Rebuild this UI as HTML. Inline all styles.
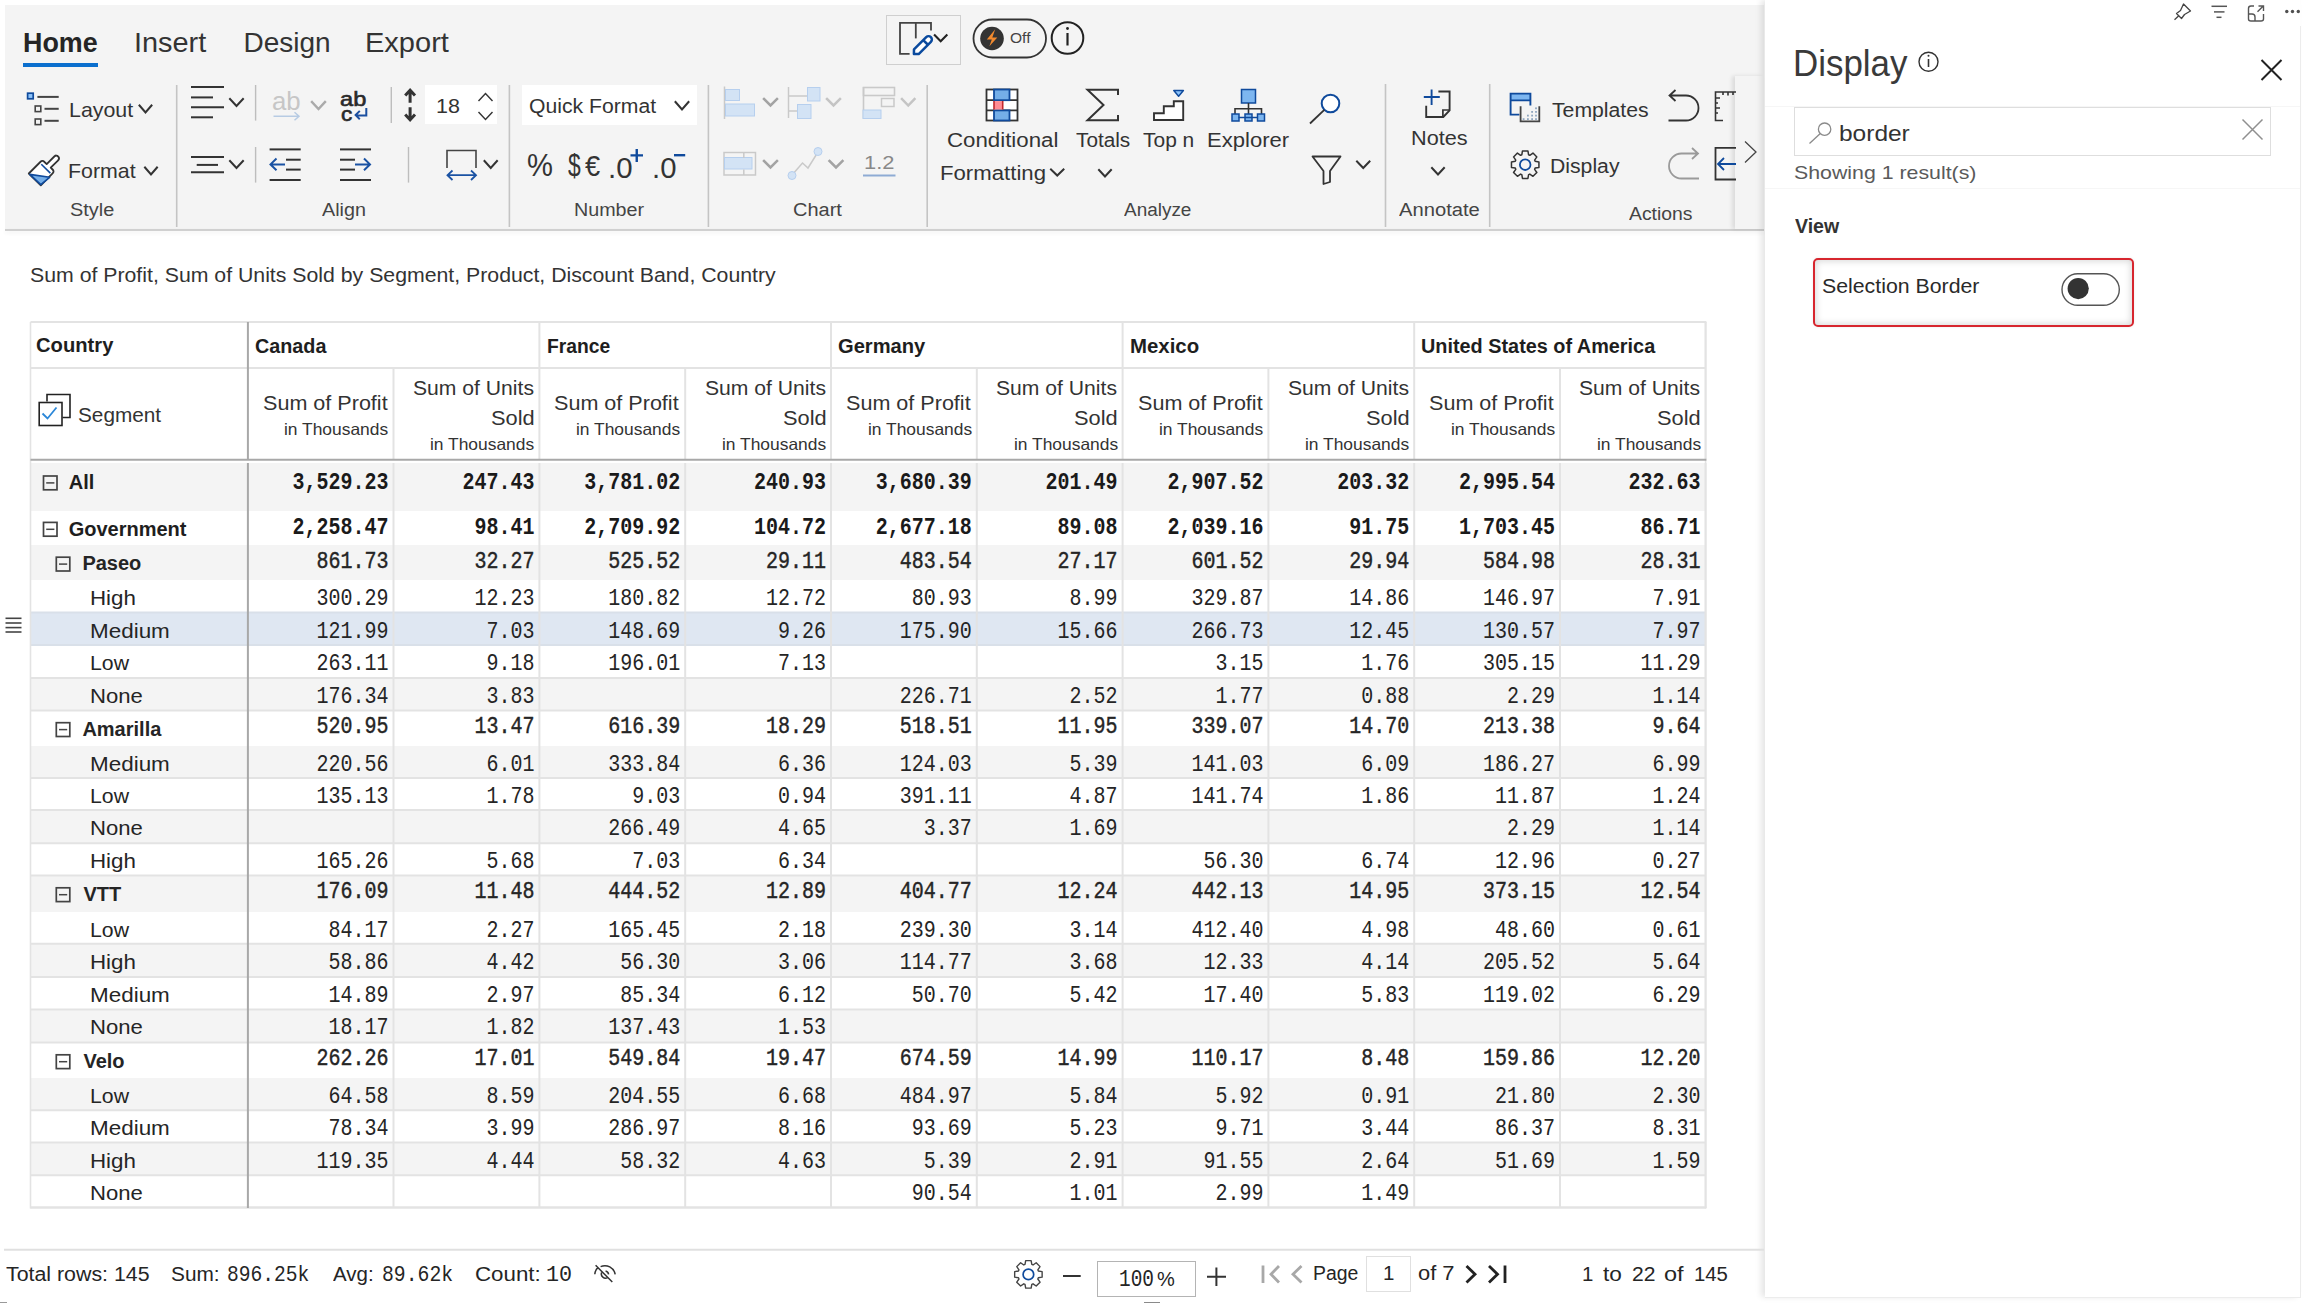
<!DOCTYPE html>
<html><head><meta charset="utf-8"><style>
html,body{margin:0;padding:0;background:#fff;}
body{position:relative;width:2304px;height:1303px;overflow:hidden;}
.t,.n{position:absolute;white-space:nowrap;line-height:1;transform-origin:0 0;}
.n{font-family:'Liberation Mono';font-size:20px;color:#252525;transform:scaleY(1.18);}
.b{font-weight:700;color:#1a1a1a;}
svg{position:absolute;left:0;top:0;}
</style></head><body>
<div style="position:absolute;left:5px;top:5px;width:1759px;height:224px;background:#f4f4f4;"></div><div style="position:absolute;left:5px;top:229px;width:1759px;height:2px;background:#d0d0d0;box-shadow:0 2px 4px rgba(0,0,0,0.07);"></div><div style="position:absolute;left:23px;top:63px;width:75px;height:4px;background:#0b6fce;"></div><div style="position:absolute;left:425px;top:85px;width:72px;height:39px;background:#ffffff;"></div><div style="position:absolute;left:522px;top:85px;width:175px;height:40px;background:#ffffff;"></div><div style="position:absolute;left:1735px;top:76px;width:29px;height:153px;background:#f4f4f4;box-shadow:-3px 0 4px rgba(0,0,0,0.10);"></div><div style="position:absolute;left:885.5px;top:14.5px;width:75px;height:50.5px;background:transparent;border:1.5px solid #cfcfcf;box-sizing:border-box;"></div><div style="position:absolute;left:1765px;top:0px;width:535px;height:1297px;background:#ffffff;box-shadow:-4px 0 6px rgba(0,0,0,0.10);"></div><div style="position:absolute;left:2299.5px;top:26px;width:1.5px;height:1271px;background:#ececec;"></div><div style="position:absolute;left:1765px;top:1296.5px;width:536px;height:1.5px;background:#ececec;"></div><div style="position:absolute;left:1765px;top:105.5px;width:535px;height:1px;background:#f6f6f6;"></div><div style="position:absolute;left:1765px;top:187.8px;width:535px;height:1px;background:#f6f6f6;"></div><div style="position:absolute;left:1794px;top:107px;width:477px;height:49px;background:#fff;border:1.5px solid #dedede;box-sizing:border-box;"></div><div style="position:absolute;left:1813px;top:257.5px;width:320.5px;height:69px;background:#fff;border:2px solid #d7262e;border-radius:5px;box-sizing:border-box;box-shadow:inset 0 0 7px 1px rgba(0,0,0,0.16), 0 0 3px rgba(0,0,0,0.08);"></div><div style="position:absolute;left:30.5px;top:463px;width:1675.5px;height:48px;background:#f4f4f4;"></div><div style="position:absolute;left:30.5px;top:511px;width:1675.5px;height:34px;background:#fff;"></div><div style="position:absolute;left:30.5px;top:545px;width:1675.5px;height:35px;background:#f4f4f4;"></div><div style="position:absolute;left:30.5px;top:580px;width:1675.5px;height:32.5px;background:#fff;"></div><div style="position:absolute;left:30.5px;top:612.5px;width:1675.5px;height:32.5px;background:#dfe7f2;"></div><div style="position:absolute;left:30.5px;top:645px;width:1675.5px;height:33px;background:#fff;"></div><div style="position:absolute;left:30.5px;top:678px;width:1675.5px;height:32.5px;background:#f4f4f4;"></div><div style="position:absolute;left:30.5px;top:710.5px;width:1675.5px;height:35.5px;background:#fff;"></div><div style="position:absolute;left:30.5px;top:746px;width:1675.5px;height:32px;background:#f4f4f4;"></div><div style="position:absolute;left:30.5px;top:778px;width:1675.5px;height:32px;background:#fff;"></div><div style="position:absolute;left:30.5px;top:810px;width:1675.5px;height:33.299999999999955px;background:#f4f4f4;"></div><div style="position:absolute;left:30.5px;top:843.3px;width:1675.5px;height:32.30000000000007px;background:#fff;"></div><div style="position:absolute;left:30.5px;top:875.6px;width:1675.5px;height:36.0px;background:#f4f4f4;"></div><div style="position:absolute;left:30.5px;top:911.6px;width:1675.5px;height:32.10000000000002px;background:#fff;"></div><div style="position:absolute;left:30.5px;top:943.7px;width:1675.5px;height:33.19999999999993px;background:#f4f4f4;"></div><div style="position:absolute;left:30.5px;top:976.9px;width:1675.5px;height:32.5px;background:#fff;"></div><div style="position:absolute;left:30.5px;top:1009.4px;width:1675.5px;height:33.19999999999993px;background:#f4f4f4;"></div><div style="position:absolute;left:30.5px;top:1042.6px;width:1675.5px;height:35.200000000000045px;background:#fff;"></div><div style="position:absolute;left:30.5px;top:1077.8px;width:1675.5px;height:32.5px;background:#f4f4f4;"></div><div style="position:absolute;left:30.5px;top:1110.3px;width:1675.5px;height:32.299999999999955px;background:#fff;"></div><div style="position:absolute;left:30.5px;top:1142.6px;width:1675.5px;height:32.600000000000136px;background:#f4f4f4;"></div><div style="position:absolute;left:30.5px;top:1175.2px;width:1675.5px;height:32.299999999999955px;background:#fff;"></div><div style="position:absolute;left:1097px;top:1260.5px;width:99px;height:36px;background:#fff;border:1.5px solid #b4b4b4;box-sizing:border-box;"></div><div style="position:absolute;left:1365.5px;top:1255.5px;width:45.5px;height:36px;background:#fff;border:1.5px solid #e0e0e0;box-sizing:border-box;"></div><div style="position:absolute;left:1144px;top:1301.5px;width:16px;height:2px;background:#8a8a8a;"></div><div style="position:absolute;left:0px;top:1302px;width:7px;height:1px;background:#999;"></div>
<svg width="2304" height="1303" viewBox="0 0 2304 1303"><line x1="176.7" y1="85" x2="176.7" y2="227" stroke="#c4c4c4" stroke-width="1.6"/><line x1="509.4" y1="85" x2="509.4" y2="227" stroke="#c4c4c4" stroke-width="1.6"/><line x1="708.4" y1="85" x2="708.4" y2="227" stroke="#c4c4c4" stroke-width="1.6"/><line x1="927.2" y1="85" x2="927.2" y2="227" stroke="#c4c4c4" stroke-width="1.6"/><line x1="1385.5" y1="84" x2="1385.5" y2="227" stroke="#c4c4c4" stroke-width="1.6"/><line x1="1489.7" y1="84" x2="1489.7" y2="227" stroke="#c4c4c4" stroke-width="1.6"/><line x1="255.6" y1="85" x2="255.6" y2="120.6" stroke="#bdbdbd" stroke-width="1.4"/><line x1="255.6" y1="147" x2="255.6" y2="182.6" stroke="#bdbdbd" stroke-width="1.4"/><line x1="391.3" y1="87" x2="391.3" y2="123" stroke="#bdbdbd" stroke-width="1.4"/><line x1="408.5" y1="147" x2="408.5" y2="182.6" stroke="#bdbdbd" stroke-width="1.4"/><rect x="27.6" y="93.2" width="5.6" height="5.6" fill="#8cc3fb" stroke="#0f4a9c" stroke-width="1.7"/><line x1="37.4" y1="96.9" x2="58.7" y2="96.9" stroke="#444" stroke-width="2" stroke-linecap="butt"/><rect x="35.2" y="106" width="5.6" height="5.6" fill="none" stroke="#444" stroke-width="1.6"/><rect x="35.2" y="119" width="5.6" height="5.6" fill="none" stroke="#444" stroke-width="1.6"/><line x1="44.5" y1="108.8" x2="58.7" y2="108.8" stroke="#444" stroke-width="2" stroke-linecap="butt"/><line x1="44.5" y1="120.8" x2="58.7" y2="120.8" stroke="#444" stroke-width="2" stroke-linecap="butt"/><polyline points="139.5,105.5 145.5,112.5 151.5,105.5" fill="none" stroke="#333" stroke-width="2" stroke-linecap="square"/><path d="M28.8,173.5 L40.3,162 Q42.4,159.9 44.5,162 L46.7,164.1 L54.3,156.5 Q56.4,154.5 58.3,156.6 Q60,158.6 57.9,160.6 L50.7,167.6 L52.6,169.5 Q54.5,171.4 52.6,173.3 L40.8,185.3 Z" fill="#fff" stroke="#333" stroke-width="1.8" stroke-linejoin="round"/><path d="M29.8,174.4 L49.6,177.3 L40.8,184.6 Z" fill="#74aee8" stroke="#0f4a9c" stroke-width="1.6" stroke-linejoin="round"/><line x1="41.3" y1="164.2" x2="50.3" y2="173.1" stroke="#0f4a9c" stroke-width="1.6" stroke-linecap="butt"/><polyline points="145,167.5 151.0,174.5 157,167.5" fill="none" stroke="#333" stroke-width="2" stroke-linecap="square"/><line x1="191" y1="86.9" x2="224" y2="86.9" stroke="#333" stroke-width="2" stroke-linecap="butt"/><line x1="191" y1="97.4" x2="213" y2="97.4" stroke="#333" stroke-width="2" stroke-linecap="butt"/><line x1="191" y1="107.3" x2="224" y2="107.3" stroke="#333" stroke-width="2" stroke-linecap="butt"/><line x1="191" y1="117.3" x2="213" y2="117.3" stroke="#333" stroke-width="2" stroke-linecap="butt"/><polyline points="230,99 236.5,106 243,99" fill="none" stroke="#333" stroke-width="2" stroke-linecap="square"/><path d="M273.5,116.3 H299 M294.5,112.3 L299,116.3 L294.5,120.3" fill="none" stroke="#b7cbe3" stroke-width="1.5"/><polyline points="312,102 318.5,109 325,102" fill="none" stroke="#aaaaaa" stroke-width="2.4" stroke-linecap="square"/><path d="M366.3,108 V115.6 H356 M359.8,110.9 L355.6,115.1 L359.8,119.3" fill="none" stroke="#1a4fa0" stroke-width="2"/><path d="M410.1,92 V102.7 M410.1,107.3 V118 M405.2,95.6 L410.1,90.3 L415,95.6 M405.2,114.6 L410.1,119.9 L415,114.6" fill="none" stroke="#333" stroke-width="3"/><polyline points="478.5,101 485.5,93.5 492.5,101" fill="none" stroke="#333" stroke-width="1.4"/><polyline points="478.5,112 485.5,119.5 492.5,112" fill="none" stroke="#333" stroke-width="1.4"/><line x1="191" y1="157" x2="224" y2="157" stroke="#333" stroke-width="2" stroke-linecap="butt"/><line x1="196.7" y1="164.9" x2="218" y2="164.9" stroke="#333" stroke-width="2" stroke-linecap="butt"/><line x1="191" y1="172.2" x2="224" y2="172.2" stroke="#333" stroke-width="2" stroke-linecap="butt"/><polyline points="230,161 236.5,168 243,161" fill="none" stroke="#333" stroke-width="2" stroke-linecap="square"/><line x1="269.6" y1="149.4" x2="300.7" y2="149.4" stroke="#333" stroke-width="2" stroke-linecap="butt"/><line x1="286" y1="159.7" x2="300.7" y2="159.7" stroke="#333" stroke-width="2" stroke-linecap="butt"/><line x1="286" y1="169.6" x2="300.7" y2="169.6" stroke="#333" stroke-width="2" stroke-linecap="butt"/><line x1="269.6" y1="180" x2="300.7" y2="180" stroke="#333" stroke-width="2" stroke-linecap="butt"/><path d="M270.5,164.4 H285 M276.5,158.5 L270.5,164.4 L276.5,170.3" fill="none" stroke="#1a52a3" stroke-width="2"/><line x1="340" y1="149.4" x2="371" y2="149.4" stroke="#333" stroke-width="2" stroke-linecap="butt"/><line x1="340" y1="159.7" x2="355" y2="159.7" stroke="#333" stroke-width="2" stroke-linecap="butt"/><line x1="340" y1="169.6" x2="355" y2="169.6" stroke="#333" stroke-width="2" stroke-linecap="butt"/><line x1="340" y1="180" x2="371" y2="180" stroke="#333" stroke-width="2" stroke-linecap="butt"/><path d="M355,164.4 H370 M364,158.5 L370,164.4 L364,170.3" fill="none" stroke="#1a52a3" stroke-width="2"/><path d="M447,168 V150.5 H476 V168" fill="none" stroke="#444" stroke-width="1.6"/><path d="M447.5,175.2 H476 M452.5,170.5 L447.5,175.2 L452.5,180 M471,170.5 L476,175.2 L471,180" fill="none" stroke="#1a52a3" stroke-width="1.8"/><polyline points="484.5,161 490.75,168 497,161" fill="none" stroke="#333" stroke-width="2" stroke-linecap="square"/><polyline points="675.5,102 682.0,109.5 688.5,102" fill="none" stroke="#333" stroke-width="2" stroke-linecap="square"/><path d="M630.5,155.4 H643 M636.75,149 V161.9" stroke="#0f4a9c" stroke-width="2.4"/><line x1="674" y1="155.2" x2="685.2" y2="155.2" stroke="#0f4a9c" stroke-width="2.4" stroke-linecap="butt"/><line x1="724.5" y1="86.5" x2="724.5" y2="119" stroke="#c9c9c9" stroke-width="1.5" stroke-linecap="butt"/><rect x="725.5" y="89.5" width="14" height="11" fill="#d3e3f5" stroke="#b6cfee" stroke-width="1"/><rect x="725.5" y="104" width="29" height="12" fill="#d3e3f5" stroke="#b6cfee" stroke-width="1"/><polyline points="764,99 770.5,105.5 777,99" fill="none" stroke="#a3a3a3" stroke-width="2.5" stroke-linecap="square"/><path d="M788.5,87 V118 M788.5,96 H807 M788.5,111 H797" stroke="#c9c9c9" stroke-width="1.5" fill="none"/><rect x="807.5" y="87.5" width="12.5" height="13.5" fill="#d3e3f5" stroke="#b6cfee" stroke-width="1"/><rect x="797.5" y="104.5" width="13.5" height="14" fill="#d3e3f5" stroke="#b6cfee" stroke-width="1"/><polyline points="827,99 833.5,105.5 840,99" fill="none" stroke="#c4c4c4" stroke-width="2.5" stroke-linecap="square"/><rect x="863.5" y="87.5" width="31" height="8" fill="none" stroke="#c9c9c9" stroke-width="1.6"/><line x1="863.5" y1="87" x2="863.5" y2="118.5" stroke="#c9c9c9" stroke-width="1.6" stroke-linecap="butt"/><rect x="881.5" y="98.5" width="12.5" height="8" fill="none" stroke="#c9c9c9" stroke-width="1.5"/><rect x="863" y="110" width="18" height="8.5" fill="#d3e3f5" stroke="#b6cfee" stroke-width="1"/><polyline points="902,99 908.25,105.5 914.5,99" fill="none" stroke="#c4c4c4" stroke-width="2.5" stroke-linecap="square"/><rect x="724" y="152.5" width="31.5" height="22.5" fill="none" stroke="#c9c9c9" stroke-width="1.5"/><rect x="724.5" y="157.5" width="27.5" height="11.5" fill="#d3e3f5" stroke="#b6cfee" stroke-width="1"/><line x1="743.8" y1="152.5" x2="743.8" y2="158" stroke="#c9c9c9" stroke-width="1.5" stroke-linecap="butt"/><line x1="743.8" y1="169.5" x2="743.8" y2="175" stroke="#c9c9c9" stroke-width="1.5" stroke-linecap="butt"/><polyline points="764,161 770.5,167.5 777,161" fill="none" stroke="#a3a3a3" stroke-width="2.5" stroke-linecap="square"/><polyline points="792,175 802.5,163 808,168 818,152" fill="none" stroke="#c9c9c9" stroke-width="1.5"/><circle cx="792" cy="175.5" r="4" fill="#d3e3f5" stroke="#b6cfee" stroke-width="1"/><circle cx="818" cy="151.5" r="4" fill="#d3e3f5" stroke="#b6cfee" stroke-width="1"/><polyline points="829.5,161 836.0,167.5 842.5,161" fill="none" stroke="#a3a3a3" stroke-width="2.5" stroke-linecap="square"/><line x1="863" y1="175.5" x2="895.5" y2="175.5" stroke="#8eabd4" stroke-width="1.8" stroke-linecap="butt"/><rect x="986.5" y="89.5" width="31" height="31" fill="#fff" stroke="#333" stroke-width="1.8"/><path d="M986.5,100.2 H1017.5 M986.5,110.4 H1017.5" stroke="#333" stroke-width="1.8" fill="none"/><rect x="994" y="89.5" width="15.5" height="10.7" fill="#74aee8" stroke="#0f4a9c" stroke-width="1.8"/><rect x="994" y="110.4" width="15.5" height="10.1" fill="#74aee8" stroke="#0f4a9c" stroke-width="1.8"/><rect x="994" y="101.1" width="8.7" height="8.4" fill="#ff8c94"/><path d="M994,101 V109.5 M1002.7,101 V109.5" stroke="#c0282d" stroke-width="1.6" fill="none"/><polyline points="1051,169.5 1057.25,175.5 1063.5,169.5" fill="none" stroke="#333" stroke-width="2" stroke-linecap="square"/><path d="M1118,95 V89.8 H1087.5 L1103.5,105 L1087.5,120.3 H1118 V115" fill="none" stroke="#333" stroke-width="2" stroke-linejoin="miter"/><polyline points="1099,170 1105.0,176.5 1111,170" fill="none" stroke="#333" stroke-width="2" stroke-linecap="square"/><path d="M1154,120 V113.3 H1163.8 V106.3 H1173.8 V101.2 H1183.2 V120 Z" fill="#fff" stroke="#333" stroke-width="1.9"/><path d="M1173.8,90.6 H1183.4 L1178.6,96.2 Z" fill="#8cc3fb" stroke="#0f4a9c" stroke-width="1.5" stroke-linejoin="round"/><rect x="1241.5" y="89.5" width="14" height="13.5" fill="#7db6f0" stroke="#0f4a9c" stroke-width="1.5"/><path d="M1248.5,103 V114 M1235,114.5 V108.7 H1261.5 V114.5" fill="none" stroke="#333" stroke-width="1.6"/><rect x="1232.0" y="114" width="7" height="7" fill="#7db6f0" stroke="#0f4a9c" stroke-width="1.5"/><rect x="1245.0" y="114" width="7" height="7" fill="#7db6f0" stroke="#0f4a9c" stroke-width="1.5"/><rect x="1257.5" y="114" width="7" height="7" fill="#7db6f0" stroke="#0f4a9c" stroke-width="1.5"/><path d="M1238.5,117.5 H1258" stroke="#0f4a9c" stroke-width="1.5"/><circle cx="1330.5" cy="103.5" r="8.8" fill="#fff" stroke="#0f4a9c" stroke-width="2"/><line x1="1310" y1="123.5" x2="1324.3" y2="109.8" stroke="#333" stroke-width="1.8" stroke-linecap="butt"/><path d="M1312.5,156.5 H1340.5 L1330,171 V182 L1323.5,184 V171 Z" fill="none" stroke="#333" stroke-width="1.8" stroke-linejoin="round"/><polyline points="1357,161.5 1363.25,168 1369.5,161.5" fill="none" stroke="#333" stroke-width="2" stroke-linecap="square"/><path d="M1438.4,91.5 H1449.6 V110.3 L1443.3,117 H1426.2 V105.7" fill="none" stroke="#333" stroke-width="1.9"/><path d="M1442.9,117 V110 H1449.6" fill="none" stroke="#333" stroke-width="1.7"/><path d="M1423.8,97 H1439.8 M1431.6,89.4 V104.9" stroke="#0f4a9c" stroke-width="1.9"/><polyline points="1432,168 1438.0,174.5 1444,168" fill="none" stroke="#333" stroke-width="2" stroke-linecap="square"/><rect x="1510.6" y="93.6" width="19.8" height="6.8" fill="#7db6f0"/><path d="M1519.4,114.6 H1510.6 V93.6 H1530.4 V105.4 M1510.6,100.4 H1530.4" fill="none" stroke="#0f4a9c" stroke-width="1.9"/><path d="M1520.6,106.3 V121.4 H1539.3 V106.3" fill="none" stroke="#444" stroke-width="1.8"/><rect x="1535.1" y="107.39999999999999" width="1.8" height="1.8" fill="#8fa6bf"/><rect x="1531.1999999999998" y="111.0" width="1.8" height="1.8" fill="#8fa6bf"/><rect x="1535.1" y="111.0" width="1.8" height="1.8" fill="#8fa6bf"/><rect x="1527.0" y="114.69999999999999" width="1.8" height="1.8" fill="#8fa6bf"/><rect x="1531.1999999999998" y="114.69999999999999" width="1.8" height="1.8" fill="#8fa6bf"/><rect x="1535.1" y="114.69999999999999" width="1.8" height="1.8" fill="#8fa6bf"/><rect x="1522.6999999999998" y="118.19999999999999" width="1.8" height="1.8" fill="#8fa6bf"/><rect x="1527.0" y="118.19999999999999" width="1.8" height="1.8" fill="#8fa6bf"/><rect x="1531.1999999999998" y="118.19999999999999" width="1.8" height="1.8" fill="#8fa6bf"/><rect x="1535.1" y="118.19999999999999" width="1.8" height="1.8" fill="#8fa6bf"/><polygon points="1535.13,161.30 1538.93,161.97 1538.93,167.43 1535.13,168.10 1534.63,169.32 1536.84,172.48 1532.98,176.34 1529.82,174.13 1528.60,174.63 1527.93,178.43 1522.47,178.43 1521.80,174.63 1520.58,174.13 1517.42,176.34 1513.56,172.48 1515.77,169.32 1515.27,168.10 1511.47,167.43 1511.47,161.97 1515.27,161.30 1515.77,160.08 1513.56,156.92 1517.42,153.06 1520.58,155.27 1521.80,154.77 1522.47,150.97 1527.93,150.97 1528.60,154.77 1529.82,155.27 1532.98,153.06 1536.84,156.92 1534.63,160.08" fill="none" stroke="#333" stroke-width="1.5" stroke-linejoin="round"/><circle cx="1525.2" cy="164.7" r="5.3" fill="none" stroke="#0f4a9c" stroke-width="1.8"/><path d="M1668.5,120.5 H1686 A12.5,12.5 0 0 0 1686,95.5 H1670 M1675.5,90 L1669.5,95.5 L1675.5,101" fill="none" stroke="#333" stroke-width="1.8"/><path d="M1699,178.5 H1681.5 A12.5,12.5 0 0 1 1681.5,153.5 H1697.5 M1692,148 L1698,153.5 L1692,159" fill="none" stroke="#9a9a9a" stroke-width="1.8"/><path d="M1723,92 H1715.5 V120.5 H1723 M1715.5,92 H1736 M1720,98 H1715.5 M1718,103 H1715.5 M1720,108 H1715.5 M1718,113 H1715.5 M1723,92 V95 M1728,92 V95.5 M1733,92 V95" fill="none" stroke="#333" stroke-width="1.6"/><path d="M1736,147.8 H1715.5 V179.5 H1736" fill="none" stroke="#333" stroke-width="1.8"/><path d="M1718,164 H1736 M1724,158 L1718,164 L1724,170" fill="none" stroke="#0f4a9c" stroke-width="1.8"/><polyline points="1745,141.5 1756,152 1745,162.5" fill="none" stroke="#444" stroke-width="1.3"/><path d="M931,30.5 V22.8 H900 V53.8 H909.6" fill="none" stroke="#444" stroke-width="1.8"/><line x1="915.8" y1="22.8" x2="915.8" y2="38.4" stroke="#444" stroke-width="1.8" stroke-linecap="butt"/><g transform="translate(922.4,45.6) rotate(-45)"><path d="M-12,0 L-8.6,-3.3 H8.7 A3.3,3.3 0 0 1 8.7,3.3 H-8.6 Z" fill="#fff" stroke="#0a4a9e" stroke-width="2.5" stroke-linejoin="round"/><line x1="4.5" y1="-3.3" x2="4.5" y2="3.3" stroke="#0a4a9e" stroke-width="2.5"/></g><polyline points="934.8,35.2 940.7,41.2 946.6,35.2" fill="none" stroke="#222" stroke-width="2.1" stroke-linecap="square"/><rect x="973.5" y="19.5" width="72.5" height="38" rx="19" fill="none" stroke="#333" stroke-width="1.8"/><circle cx="992" cy="38.5" r="11.8" fill="#333"/><path d="M995.2,29.3 L986.8,39.4 H991.8 L989.4,46.3 L997.3,37.5 H992.3 Z" fill="#f28a2e"/><circle cx="1067.5" cy="38" r="15.8" fill="none" stroke="#222" stroke-width="2"/><line x1="1067.5" y1="33" x2="1067.5" y2="45.5" stroke="#222" stroke-width="2.2" stroke-linecap="butt"/><circle cx="1067.5" cy="28.5" r="1.4" fill="#222"/><path d="M2183.5,4 L2190.5,11 L2184.5,14.5 L2181.5,18.5 L2176.5,13.5 L2180.5,10.5 Z M2178.5,16 L2174.5,19.8" fill="none" stroke="#444" stroke-width="1.3" stroke-linejoin="round"/><line x1="2211.5" y1="6.3" x2="2227" y2="6.3" stroke="#555" stroke-width="1.5" stroke-linecap="butt"/><line x1="2214" y1="11.9" x2="2224.5" y2="11.9" stroke="#555" stroke-width="1.5" stroke-linecap="butt"/><line x1="2216.5" y1="17.3" x2="2221.5" y2="17.3" stroke="#555" stroke-width="1.5" stroke-linecap="butt"/><path d="M2254,6 H2251 Q2248.5,6 2248.5,8.5 V19 Q2248.5,21 2251,21 H2261 Q2263.5,21 2263.5,19 V14 M2248.5,14 H2252 Q2255,14 2255,17 V21 M2257.5,11.8 L2263,6.2 M2258.5,6 H2263.5 V11" fill="none" stroke="#555" stroke-width="1.4"/><circle cx="2286.8" cy="11.5" r="1.7" fill="#505050"/><circle cx="2292.5" cy="11.5" r="1.7" fill="#505050"/><circle cx="2298.3" cy="11.5" r="1.7" fill="#505050"/><circle cx="1928.5" cy="61.7" r="9.5" fill="none" stroke="#333" stroke-width="1.4"/><line x1="1928.5" y1="59" x2="1928.5" y2="67" stroke="#333" stroke-width="1.6" stroke-linecap="butt"/><circle cx="1928.5" cy="55.8" r="1" fill="#333"/><path d="M2261.5,60 L2281.5,80 M2281.5,60 L2261.5,80" stroke="#222" stroke-width="2"/><circle cx="1824.6" cy="129.2" r="6.2" fill="none" stroke="#8a8a8a" stroke-width="1.3"/><line x1="1809.5" y1="143.5" x2="1820.3" y2="133.5" stroke="#8a8a8a" stroke-width="1.3" stroke-linecap="butt"/><path d="M2242.5,119.5 L2262.5,139.5 M2262.5,119.5 L2242.5,139.5" stroke="#8f8f8f" stroke-width="1.5"/><rect x="2062" y="273.8" width="57.3" height="31.5" rx="15.75" fill="#fff" stroke="#555" stroke-width="1.4"/><circle cx="2078.2" cy="288.6" r="10.6" fill="#333"/><rect x="43.5" y="476" width="13.5" height="13.8" fill="none" stroke="#444" stroke-width="1.7"/><line x1="46.2" y1="482.9" x2="54.4" y2="482.9" stroke="#444" stroke-width="1.5" stroke-linecap="butt"/><rect x="43.5" y="522.4" width="13.5" height="13.8" fill="none" stroke="#444" stroke-width="1.7"/><line x1="46.2" y1="529.3" x2="54.4" y2="529.3" stroke="#444" stroke-width="1.5" stroke-linecap="butt"/><rect x="56.3" y="557.2" width="13.5" height="13.8" fill="none" stroke="#444" stroke-width="1.7"/><line x1="59" y1="564.1" x2="67.2" y2="564.1" stroke="#444" stroke-width="1.5" stroke-linecap="butt"/><line x1="30.5" y1="612.5" x2="1706" y2="612.5" stroke="#d9e0e9" stroke-width="2" stroke-linecap="butt"/><line x1="30.5" y1="645" x2="1706" y2="645" stroke="#d9e0e9" stroke-width="2" stroke-linecap="butt"/><line x1="30.5" y1="678" x2="1706" y2="678" stroke="#e3e3e3" stroke-width="2" stroke-linecap="butt"/><line x1="30.5" y1="710.5" x2="1706" y2="710.5" stroke="#e3e3e3" stroke-width="2" stroke-linecap="butt"/><rect x="56.3" y="722.7" width="13.5" height="13.8" fill="none" stroke="#444" stroke-width="1.7"/><line x1="59" y1="729.6" x2="67.2" y2="729.6" stroke="#444" stroke-width="1.5" stroke-linecap="butt"/><line x1="30.5" y1="778" x2="1706" y2="778" stroke="#e3e3e3" stroke-width="2" stroke-linecap="butt"/><line x1="30.5" y1="810" x2="1706" y2="810" stroke="#e3e3e3" stroke-width="2" stroke-linecap="butt"/><line x1="30.5" y1="843.3" x2="1706" y2="843.3" stroke="#e3e3e3" stroke-width="2" stroke-linecap="butt"/><line x1="30.5" y1="875.6" x2="1706" y2="875.6" stroke="#e3e3e3" stroke-width="2" stroke-linecap="butt"/><rect x="56.3" y="887.8000000000001" width="13.5" height="13.8" fill="none" stroke="#444" stroke-width="1.7"/><line x1="59" y1="894.7" x2="67.2" y2="894.7" stroke="#444" stroke-width="1.5" stroke-linecap="butt"/><line x1="30.5" y1="943.7" x2="1706" y2="943.7" stroke="#e3e3e3" stroke-width="2" stroke-linecap="butt"/><line x1="30.5" y1="976.9" x2="1706" y2="976.9" stroke="#e3e3e3" stroke-width="2" stroke-linecap="butt"/><line x1="30.5" y1="1009.4" x2="1706" y2="1009.4" stroke="#e3e3e3" stroke-width="2" stroke-linecap="butt"/><line x1="30.5" y1="1042.6" x2="1706" y2="1042.6" stroke="#e3e3e3" stroke-width="2" stroke-linecap="butt"/><rect x="56.3" y="1054.8" width="13.5" height="13.8" fill="none" stroke="#444" stroke-width="1.7"/><line x1="59" y1="1061.6999999999998" x2="67.2" y2="1061.6999999999998" stroke="#444" stroke-width="1.5" stroke-linecap="butt"/><line x1="30.5" y1="1110.3" x2="1706" y2="1110.3" stroke="#e3e3e3" stroke-width="2" stroke-linecap="butt"/><line x1="30.5" y1="1142.6" x2="1706" y2="1142.6" stroke="#e3e3e3" stroke-width="2" stroke-linecap="butt"/><line x1="30.5" y1="1175.2" x2="1706" y2="1175.2" stroke="#e3e3e3" stroke-width="2" stroke-linecap="butt"/><line x1="30.5" y1="1207.5" x2="1706" y2="1207.5" stroke="#e3e3e3" stroke-width="2" stroke-linecap="butt"/><line x1="30.5" y1="322" x2="1706.4" y2="322" stroke="#e3e3e3" stroke-width="2" stroke-linecap="butt"/><line x1="30.5" y1="322" x2="30.5" y2="1208.5" stroke="#e3e3e3" stroke-width="1.6" stroke-linecap="butt"/><line x1="1705.6" y1="322" x2="1705.6" y2="1208.5" stroke="#e3e3e3" stroke-width="1.6" stroke-linecap="butt"/><line x1="30.5" y1="1207.5" x2="1706.4" y2="1207.5" stroke="#e3e3e3" stroke-width="2" stroke-linecap="butt"/><line x1="30.5" y1="368" x2="1706" y2="368" stroke="#e3e3e3" stroke-width="2" stroke-linecap="butt"/><line x1="247.9" y1="322" x2="247.9" y2="459" stroke="#a8a8a8" stroke-width="2" stroke-linecap="butt"/><line x1="247.9" y1="463" x2="247.9" y2="1208" stroke="#a8a8a8" stroke-width="2" stroke-linecap="butt"/><line x1="393.5" y1="368" x2="393.5" y2="459" stroke="#e3e3e3" stroke-width="2" stroke-linecap="butt"/><line x1="393.5" y1="463" x2="393.5" y2="1208" stroke="#e3e3e3" stroke-width="2" stroke-linecap="butt"/><line x1="539.4" y1="322" x2="539.4" y2="459" stroke="#e3e3e3" stroke-width="2" stroke-linecap="butt"/><line x1="539.4" y1="463" x2="539.4" y2="1208" stroke="#e3e3e3" stroke-width="2" stroke-linecap="butt"/><line x1="685.2" y1="368" x2="685.2" y2="459" stroke="#e3e3e3" stroke-width="2" stroke-linecap="butt"/><line x1="685.2" y1="463" x2="685.2" y2="1208" stroke="#e3e3e3" stroke-width="2" stroke-linecap="butt"/><line x1="831" y1="322" x2="831" y2="459" stroke="#e3e3e3" stroke-width="2" stroke-linecap="butt"/><line x1="831" y1="463" x2="831" y2="1208" stroke="#e3e3e3" stroke-width="2" stroke-linecap="butt"/><line x1="976.8" y1="368" x2="976.8" y2="459" stroke="#e3e3e3" stroke-width="2" stroke-linecap="butt"/><line x1="976.8" y1="463" x2="976.8" y2="1208" stroke="#e3e3e3" stroke-width="2" stroke-linecap="butt"/><line x1="1122.6" y1="322" x2="1122.6" y2="459" stroke="#e3e3e3" stroke-width="2" stroke-linecap="butt"/><line x1="1122.6" y1="463" x2="1122.6" y2="1208" stroke="#e3e3e3" stroke-width="2" stroke-linecap="butt"/><line x1="1268.4" y1="368" x2="1268.4" y2="459" stroke="#e3e3e3" stroke-width="2" stroke-linecap="butt"/><line x1="1268.4" y1="463" x2="1268.4" y2="1208" stroke="#e3e3e3" stroke-width="2" stroke-linecap="butt"/><line x1="1414.2" y1="322" x2="1414.2" y2="459" stroke="#e3e3e3" stroke-width="2" stroke-linecap="butt"/><line x1="1414.2" y1="463" x2="1414.2" y2="1208" stroke="#e3e3e3" stroke-width="2" stroke-linecap="butt"/><line x1="1560" y1="368" x2="1560" y2="459" stroke="#e3e3e3" stroke-width="2" stroke-linecap="butt"/><line x1="1560" y1="463" x2="1560" y2="1208" stroke="#e3e3e3" stroke-width="2" stroke-linecap="butt"/><line x1="1705.6" y1="322" x2="1705.6" y2="459" stroke="#e3e3e3" stroke-width="2" stroke-linecap="butt"/><line x1="1705.6" y1="463" x2="1705.6" y2="1208" stroke="#e3e3e3" stroke-width="2" stroke-linecap="butt"/><line x1="30.5" y1="459.8" x2="1706.4" y2="459.8" stroke="#a8a8a8" stroke-width="2" stroke-linecap="butt"/><path d="M47,401.5 V394.5 H70 V417.5 H62.5" fill="none" stroke="#222" stroke-width="1.6"/><rect x="39.2" y="402.5" width="22.8" height="23" fill="#fff" stroke="#222" stroke-width="1.6"/><polyline points="42.5,413.5 47.5,418.5 56.5,407.5" fill="none" stroke="#2b87d8" stroke-width="1.8"/><line x1="5.5" y1="618.3" x2="21.5" y2="618.3" stroke="#444" stroke-width="1.6" stroke-linecap="butt"/><line x1="5.5" y1="623" x2="21.5" y2="623" stroke="#444" stroke-width="1.6" stroke-linecap="butt"/><line x1="5.5" y1="627.6" x2="21.5" y2="627.6" stroke="#444" stroke-width="1.6" stroke-linecap="butt"/><line x1="5.5" y1="632" x2="21.5" y2="632" stroke="#444" stroke-width="1.6" stroke-linecap="butt"/><line x1="4" y1="1249.7" x2="1764" y2="1249.7" stroke="#e0e0e0" stroke-width="2" stroke-linecap="butt"/><path d="M594.8,1274.3 A10.4,10.4 0 0 1 597.8,1267.6 M600.6,1266.6 A10.5,10.5 0 0 1 615.2,1274.3 M595.6,1265.3 L612.3,1282 M605.6,1270.9 A4,4 0 0 1 608.6,1274.3 M601.6,1272.5 A4.2,4.2 0 0 0 607.6,1277.6" fill="none" stroke="#333" stroke-width="1.5"/><polygon points="1038.33,1271.00 1042.13,1271.67 1042.13,1277.13 1038.33,1277.80 1037.83,1279.02 1040.04,1282.18 1036.18,1286.04 1033.02,1283.83 1031.80,1284.33 1031.13,1288.13 1025.67,1288.13 1025.00,1284.33 1023.78,1283.83 1020.62,1286.04 1016.76,1282.18 1018.97,1279.02 1018.47,1277.80 1014.67,1277.13 1014.67,1271.67 1018.47,1271.00 1018.97,1269.78 1016.76,1266.62 1020.62,1262.76 1023.78,1264.97 1025.00,1264.47 1025.67,1260.67 1031.13,1260.67 1031.80,1264.47 1033.02,1264.97 1036.18,1262.76 1040.04,1266.62 1037.83,1269.78" fill="none" stroke="#444" stroke-width="1.4" stroke-linejoin="round"/><circle cx="1028.4" cy="1274.4" r="5.3" fill="none" stroke="#0f4a9c" stroke-width="1.7"/><line x1="1063" y1="1276" x2="1080.7" y2="1276" stroke="#333" stroke-width="2" stroke-linecap="butt"/><path d="M1216.4,1267.5 V1286 M1207,1276.8 H1226" stroke="#333" stroke-width="2"/><path d="M1263,1265.5 V1283 M1279,1266 L1271,1274.2 L1279,1282.5" fill="none" stroke="#a8a8a8" stroke-width="2.8"/><path d="M1301.5,1266 L1293,1274.2 L1301.5,1282.5" fill="none" stroke="#a8a8a8" stroke-width="2.8"/><path d="M1466.5,1266 L1475,1274.2 L1466.5,1282.5" fill="none" stroke="#222" stroke-width="2.8"/><path d="M1489,1266 L1497.5,1274.2 L1489,1282.5 M1505,1265.5 V1283" fill="none" stroke="#222" stroke-width="2.8"/></svg>
<div class="t" style="left:23.08px;top:29.00px;font-family:'Liberation Sans';font-size:28px;color:#252525;font-weight:700;transform:scaleX(0.9600);">Home</div><div class="t" style="left:134.14px;top:28.70px;font-family:'Liberation Sans';font-size:28px;color:#333;transform:scaleX(1.0309);">Insert</div><div class="t" style="left:243.41px;top:28.70px;font-family:'Liberation Sans';font-size:28px;color:#333;">Design</div><div class="t" style="left:365.13px;top:28.70px;font-family:'Liberation Sans';font-size:28px;color:#333;transform:scaleX(1.0367);">Export</div><div class="t" style="left:69.36px;top:98.80px;font-family:'Liberation Sans';font-size:21px;color:#333;transform:scaleX(1.0180);">Layout</div><div class="t" style="left:67.67px;top:160.40px;font-family:'Liberation Sans';font-size:21px;color:#333;transform:scaleX(1.0169);">Format</div><div class="t" style="left:70.29px;top:200.80px;font-family:'Liberation Sans';font-size:18px;color:#444;transform:scaleX(1.1053);">Style</div><div class="t" style="left:271.77px;top:88.70px;font-family:'Liberation Sans';font-size:25px;color:#c6c6c6;transform:scaleX(1.0308);">ab</div><div class="t" style="left:340.42px;top:88.50px;font-family:'Liberation Sans';font-size:20px;color:#2a2a2a;transform:scaleX(1.1800);-webkit-text-stroke:0.6px #2a2a2a;">ab</div><div class="t" style="left:340.88px;top:103.50px;font-family:'Liberation Sans';font-size:20px;color:#2a2a2a;transform:scaleX(1.1250);-webkit-text-stroke:0.6px #2a2a2a;">c</div><div class="t" style="left:436.43px;top:95.50px;font-family:'Liberation Sans';font-size:20px;color:#333;transform:scaleX(1.0750);">18</div><div class="t" style="left:322.40px;top:200.80px;font-family:'Liberation Sans';font-size:18px;color:#444;transform:scaleX(1.0974);">Align</div><div class="t" style="left:529.14px;top:96.20px;font-family:'Liberation Sans';font-size:20px;color:#333;transform:scaleX(1.0588);">Quick Format</div><div class="t" style="left:526.89px;top:149.30px;font-family:'Liberation Sans';font-size:32px;color:#333;transform:scaleX(0.9111);">%</div><div class="t" style="left:567.66px;top:150.30px;font-family:'Liberation Sans';font-size:31px;color:#333;transform:scaleX(0.7375);">$</div><div class="t" style="left:585.20px;top:151.30px;font-family:'Liberation Sans';font-size:30px;color:#333;transform:scaleX(0.9062);">€</div><div class="t" style="left:607.96px;top:154.30px;font-family:'Liberation Sans';font-size:29px;color:#333;transform:scaleX(1.0150);">.0</div><div class="t" style="left:651.77px;top:154.30px;font-family:'Liberation Sans';font-size:29px;color:#333;transform:scaleX(1.0100);">.0</div><div class="t" style="left:573.90px;top:201.20px;font-family:'Liberation Sans';font-size:18px;color:#444;transform:scaleX(1.0952);">Number</div><div class="t" style="left:863.78px;top:153.70px;font-family:'Liberation Sans';font-size:18px;color:#888888;transform:scaleX(1.2174);">1.2</div><div class="t" style="left:793.19px;top:201.00px;font-family:'Liberation Sans';font-size:18px;color:#444;transform:scaleX(1.1093);">Chart</div><div class="t" style="left:947.39px;top:130.30px;font-family:'Liberation Sans';font-size:20px;color:#333;transform:scaleX(1.1133);">Conditional</div><div class="t" style="left:940.08px;top:163.00px;font-family:'Liberation Sans';font-size:20px;color:#333;transform:scaleX(1.1086);">Formatting</div><div class="t" style="left:1076.00px;top:130.30px;font-family:'Liberation Sans';font-size:20px;color:#333;transform:scaleX(1.0385);">Totals</div><div class="t" style="left:1143.00px;top:130.30px;font-family:'Liberation Sans';font-size:20px;color:#333;transform:scaleX(1.0479);">Top n</div><div class="t" style="left:1207.39px;top:130.30px;font-family:'Liberation Sans';font-size:20px;color:#333;transform:scaleX(1.1028);">Explorer</div><div class="t" style="left:1123.90px;top:200.70px;font-family:'Liberation Sans';font-size:18px;color:#444;transform:scaleX(1.0524);">Analyze</div><div class="t" style="left:1410.83px;top:127.70px;font-family:'Liberation Sans';font-size:20px;color:#333;transform:scaleX(1.0840);">Notes</div><div class="t" style="left:1398.60px;top:200.50px;font-family:'Liberation Sans';font-size:18px;color:#444;transform:scaleX(1.1211);">Annotate</div><div class="t" style="left:1551.80px;top:99.50px;font-family:'Liberation Sans';font-size:20px;color:#333;transform:scaleX(1.0604);">Templates</div><div class="t" style="left:1550.48px;top:155.80px;font-family:'Liberation Sans';font-size:20px;color:#333;transform:scaleX(1.0594);">Display</div><div class="t" style="left:1628.80px;top:204.70px;font-family:'Liberation Sans';font-size:18px;color:#444;transform:scaleX(1.0763);">Actions</div><div class="t" style="left:1009.89px;top:31.00px;font-family:'Liberation Sans';font-size:14px;color:#444;transform:scaleX(1.1111);">Off</div><div class="t" style="left:1793.09px;top:45.90px;font-family:'Liberation Sans';font-size:36px;color:#3a3a3a;transform:scaleX(0.9696);">Display</div><div class="t" style="left:1838.89px;top:122.60px;font-family:'Liberation Sans';font-size:22px;color:#333;transform:scaleX(1.1129);">border</div><div class="t" style="left:1794.08px;top:163.40px;font-family:'Liberation Sans';font-size:19px;color:#5a5a5a;transform:scaleX(1.1217);">Showing 1 result(s)</div><div class="t" style="left:1795.00px;top:215.60px;font-family:'Liberation Sans';font-size:20px;color:#333;font-weight:700;transform:scaleX(0.9778);">View</div><div class="t" style="left:1822.44px;top:276.30px;font-family:'Liberation Sans';font-size:20px;color:#2a2a2a;transform:scaleX(1.0646);">Selection Border</div><div class="t" style="left:29.74px;top:264.60px;font-family:'Liberation Sans';font-size:20px;color:#333;transform:scaleX(1.0631);">Sum of Profit, Sum of Units Sold by Segment, Product, Discount Band, Country</div><div class="t" style="left:68.70px;top:471.80px;font-family:'Liberation Sans';font-size:20px;color:#1e1e1e;font-weight:700;">All</div><div class="t" style="left:68.70px;top:519.00px;font-family:'Liberation Sans';font-size:20px;color:#1e1e1e;font-weight:700;">Government</div><div class="t" style="left:82.40px;top:553.00px;font-family:'Liberation Sans';font-size:20px;color:#252525;font-weight:700;">Paseo</div><div class="t" style="left:89.77px;top:588.00px;font-family:'Liberation Sans';font-size:20px;color:#252525;transform:scaleX(1.1158);">High</div><div class="t" style="left:89.76px;top:620.50px;font-family:'Liberation Sans';font-size:20px;color:#252525;transform:scaleX(1.1221);">Medium</div><div class="t" style="left:89.87px;top:653.00px;font-family:'Liberation Sans';font-size:20px;color:#252525;transform:scaleX(1.0629);">Low</div><div class="t" style="left:89.79px;top:686.00px;font-family:'Liberation Sans';font-size:20px;color:#252525;transform:scaleX(1.1044);">None</div><div class="t" style="left:82.40px;top:718.50px;font-family:'Liberation Sans';font-size:20px;color:#252525;font-weight:700;">Amarilla</div><div class="t" style="left:89.76px;top:754.00px;font-family:'Liberation Sans';font-size:20px;color:#252525;transform:scaleX(1.1221);">Medium</div><div class="t" style="left:89.87px;top:786.00px;font-family:'Liberation Sans';font-size:20px;color:#252525;transform:scaleX(1.0629);">Low</div><div class="t" style="left:89.79px;top:818.00px;font-family:'Liberation Sans';font-size:20px;color:#252525;transform:scaleX(1.1044);">None</div><div class="t" style="left:89.77px;top:851.30px;font-family:'Liberation Sans';font-size:20px;color:#252525;transform:scaleX(1.1158);">High</div><div class="t" style="left:83.40px;top:883.60px;font-family:'Liberation Sans';font-size:20px;color:#252525;font-weight:700;">VTT</div><div class="t" style="left:89.87px;top:919.60px;font-family:'Liberation Sans';font-size:20px;color:#252525;transform:scaleX(1.0629);">Low</div><div class="t" style="left:89.77px;top:951.70px;font-family:'Liberation Sans';font-size:20px;color:#252525;transform:scaleX(1.1158);">High</div><div class="t" style="left:89.76px;top:984.90px;font-family:'Liberation Sans';font-size:20px;color:#252525;transform:scaleX(1.1221);">Medium</div><div class="t" style="left:89.79px;top:1017.40px;font-family:'Liberation Sans';font-size:20px;color:#252525;transform:scaleX(1.1044);">None</div><div class="t" style="left:83.40px;top:1050.60px;font-family:'Liberation Sans';font-size:20px;color:#252525;font-weight:700;">Velo</div><div class="t" style="left:89.87px;top:1085.80px;font-family:'Liberation Sans';font-size:20px;color:#252525;transform:scaleX(1.0629);">Low</div><div class="t" style="left:89.76px;top:1118.30px;font-family:'Liberation Sans';font-size:20px;color:#252525;transform:scaleX(1.1221);">Medium</div><div class="t" style="left:89.77px;top:1150.60px;font-family:'Liberation Sans';font-size:20px;color:#252525;transform:scaleX(1.1158);">High</div><div class="t" style="left:89.79px;top:1183.20px;font-family:'Liberation Sans';font-size:20px;color:#252525;transform:scaleX(1.1044);">None</div><div class="t" style="left:35.89px;top:335.20px;font-family:'Liberation Sans';font-size:20px;color:#1e1e1e;font-weight:700;transform:scaleX(1.0092);">Country</div><div class="t" style="left:77.96px;top:404.50px;font-family:'Liberation Sans';font-size:20px;color:#333;transform:scaleX(1.0380);">Segment</div><div class="t" style="left:254.81px;top:335.50px;font-family:'Liberation Sans';font-size:20px;color:#1e1e1e;font-weight:700;transform:scaleX(0.9887);">Canada</div><div class="t" style="left:546.54px;top:335.50px;font-family:'Liberation Sans';font-size:20px;color:#1e1e1e;font-weight:700;transform:scaleX(0.9641);">France</div><div class="t" style="left:837.59px;top:335.50px;font-family:'Liberation Sans';font-size:20px;color:#1e1e1e;font-weight:700;transform:scaleX(1.0070);">Germany</div><div class="t" style="left:1129.98px;top:335.50px;font-family:'Liberation Sans';font-size:20px;color:#1e1e1e;font-weight:700;transform:scaleX(1.0197);">Mexico</div><div class="t" style="left:1420.71px;top:335.50px;font-family:'Liberation Sans';font-size:20px;color:#1e1e1e;font-weight:700;transform:scaleX(0.9923);">United States of America</div><div class="t" style="left:262.72px;top:393.10px;font-family:'Liberation Sans';font-size:20px;color:#333;transform:scaleX(1.0783);">Sum of Profit</div><div class="t" style="left:284.45px;top:421.10px;font-family:'Liberation Sans';font-size:16.5px;color:#333;transform:scaleX(1.0546);">in Thousands</div><div class="t" style="left:413.24px;top:377.90px;font-family:'Liberation Sans';font-size:20px;color:#333;transform:scaleX(1.0566);">Sum of Units</div><div class="t" style="left:491.21px;top:408.40px;font-family:'Liberation Sans';font-size:20px;color:#333;transform:scaleX(1.0895);">Sold</div><div class="t" style="left:430.35px;top:436.40px;font-family:'Liberation Sans';font-size:16.5px;color:#333;transform:scaleX(1.0546);">in Thousands</div><div class="t" style="left:554.42px;top:393.10px;font-family:'Liberation Sans';font-size:20px;color:#333;transform:scaleX(1.0783);">Sum of Profit</div><div class="t" style="left:576.15px;top:421.10px;font-family:'Liberation Sans';font-size:16.5px;color:#333;transform:scaleX(1.0546);">in Thousands</div><div class="t" style="left:704.84px;top:377.90px;font-family:'Liberation Sans';font-size:20px;color:#333;transform:scaleX(1.0566);">Sum of Units</div><div class="t" style="left:782.81px;top:408.40px;font-family:'Liberation Sans';font-size:20px;color:#333;transform:scaleX(1.0895);">Sold</div><div class="t" style="left:721.95px;top:436.40px;font-family:'Liberation Sans';font-size:16.5px;color:#333;transform:scaleX(1.0546);">in Thousands</div><div class="t" style="left:846.02px;top:393.10px;font-family:'Liberation Sans';font-size:20px;color:#333;transform:scaleX(1.0783);">Sum of Profit</div><div class="t" style="left:867.75px;top:421.10px;font-family:'Liberation Sans';font-size:16.5px;color:#333;transform:scaleX(1.0546);">in Thousands</div><div class="t" style="left:996.44px;top:377.90px;font-family:'Liberation Sans';font-size:20px;color:#333;transform:scaleX(1.0566);">Sum of Units</div><div class="t" style="left:1074.41px;top:408.40px;font-family:'Liberation Sans';font-size:20px;color:#333;transform:scaleX(1.0895);">Sold</div><div class="t" style="left:1013.55px;top:436.40px;font-family:'Liberation Sans';font-size:16.5px;color:#333;transform:scaleX(1.0546);">in Thousands</div><div class="t" style="left:1137.62px;top:393.10px;font-family:'Liberation Sans';font-size:20px;color:#333;transform:scaleX(1.0783);">Sum of Profit</div><div class="t" style="left:1159.35px;top:421.10px;font-family:'Liberation Sans';font-size:16.5px;color:#333;transform:scaleX(1.0546);">in Thousands</div><div class="t" style="left:1288.04px;top:377.90px;font-family:'Liberation Sans';font-size:20px;color:#333;transform:scaleX(1.0566);">Sum of Units</div><div class="t" style="left:1366.01px;top:408.40px;font-family:'Liberation Sans';font-size:20px;color:#333;transform:scaleX(1.0895);">Sold</div><div class="t" style="left:1305.15px;top:436.40px;font-family:'Liberation Sans';font-size:16.5px;color:#333;transform:scaleX(1.0546);">in Thousands</div><div class="t" style="left:1429.22px;top:393.10px;font-family:'Liberation Sans';font-size:20px;color:#333;transform:scaleX(1.0783);">Sum of Profit</div><div class="t" style="left:1450.95px;top:421.10px;font-family:'Liberation Sans';font-size:16.5px;color:#333;transform:scaleX(1.0546);">in Thousands</div><div class="t" style="left:1579.44px;top:377.90px;font-family:'Liberation Sans';font-size:20px;color:#333;transform:scaleX(1.0566);">Sum of Units</div><div class="t" style="left:1657.41px;top:408.40px;font-family:'Liberation Sans';font-size:20px;color:#333;transform:scaleX(1.0895);">Sold</div><div class="t" style="left:1596.55px;top:436.40px;font-family:'Liberation Sans';font-size:16.5px;color:#333;transform:scaleX(1.0546);">in Thousands</div><div class="t" style="left:5.60px;top:1264.10px;font-family:'Liberation Sans';font-size:20px;color:#252525;transform:scaleX(1.0672);">Total rows: 145</div><div class="t" style="left:171.16px;top:1264.10px;font-family:'Liberation Sans';font-size:20px;color:#252525;transform:scaleX(1.0409);">Sum:</div><div class="t" style="left:226.77px;top:1267.10px;font-family:'Liberation Mono';font-size:19px;color:#252525;transform:scale(1.0321,1.2);transform-origin:0 14px;">896.25k</div><div class="t" style="left:333.30px;top:1264.10px;font-family:'Liberation Sans';font-size:20px;color:#252525;transform:scaleX(1.0237);">Avg:</div><div class="t" style="left:381.76px;top:1267.10px;font-family:'Liberation Mono';font-size:19px;color:#252525;transform:scale(1.0394,1.2);transform-origin:0 14px;">89.62k</div><div class="t" style="left:475.28px;top:1264.10px;font-family:'Liberation Sans';font-size:20px;color:#252525;transform:scaleX(1.1161);">Count:</div><div class="t" style="left:545.86px;top:1267.10px;font-family:'Liberation Mono';font-size:19px;color:#252525;transform:scale(1.1429,1.2);transform-origin:0 14px;">10</div><div class="t" style="left:1118.88px;top:1270.10px;font-family:'Liberation Mono';font-size:21px;color:#252525;transform:scale(0.9250,1.18);transform-origin:0 16px;">100</div><div class="t" style="left:1156.85px;top:1268.10px;font-family:'Liberation Sans';font-size:21px;color:#252525;transform:scaleX(0.9529);">%</div><div class="t" style="left:1312.56px;top:1263.40px;font-family:'Liberation Sans';font-size:20px;color:#252525;transform:scaleX(0.9705);">Page</div><div class="t" style="left:1382.72px;top:1263.40px;font-family:'Liberation Sans';font-size:20px;color:#252525;transform:scaleX(1.0278);">1</div><div class="t" style="left:1417.91px;top:1263.40px;font-family:'Liberation Sans';font-size:20px;color:#252525;transform:scaleX(1.0938);">of 7</div><div class="t" style="left:1581.88px;top:1263.50px;font-family:'Liberation Sans';font-size:20px;color:#252525;transform:scaleX(1.0222);">1</div><div class="t" style="left:1603.20px;top:1263.50px;font-family:'Liberation Sans';font-size:20px;color:#252525;transform:scaleX(1.1312);">to</div><div class="t" style="left:1631.64px;top:1263.50px;font-family:'Liberation Sans';font-size:20px;color:#252525;transform:scaleX(1.0550);">22</div><div class="t" style="left:1664.03px;top:1263.50px;font-family:'Liberation Sans';font-size:20px;color:#252525;transform:scaleX(1.1750);">of</div><div class="t" style="left:1693.68px;top:1263.50px;font-family:'Liberation Sans';font-size:20px;color:#252525;transform:scaleX(1.0156);">145</div><div class="n b" style="left:292.50px;top:474.20px;transform-origin:0 15px;">3,529.23</div><div class="n b" style="left:462.40px;top:474.20px;transform-origin:0 15px;">247.43</div><div class="n b" style="left:584.20px;top:474.20px;transform-origin:0 15px;">3,781.02</div><div class="n b" style="left:754.00px;top:474.20px;transform-origin:0 15px;">240.93</div><div class="n b" style="left:875.80px;top:474.20px;transform-origin:0 15px;">3,680.39</div><div class="n b" style="left:1045.60px;top:474.20px;transform-origin:0 15px;">201.49</div><div class="n b" style="left:1167.40px;top:474.20px;transform-origin:0 15px;">2,907.52</div><div class="n b" style="left:1337.20px;top:474.20px;transform-origin:0 15px;">203.32</div><div class="n b" style="left:1459.00px;top:474.20px;transform-origin:0 15px;">2,995.54</div><div class="n b" style="left:1628.60px;top:474.20px;transform-origin:0 15px;">232.63</div><div class="n b" style="left:292.50px;top:518.50px;transform-origin:0 15px;">2,258.47</div><div class="n b" style="left:474.40px;top:518.50px;transform-origin:0 15px;">98.41</div><div class="n b" style="left:584.20px;top:518.50px;transform-origin:0 15px;">2,709.92</div><div class="n b" style="left:754.00px;top:518.50px;transform-origin:0 15px;">104.72</div><div class="n b" style="left:875.80px;top:518.50px;transform-origin:0 15px;">2,677.18</div><div class="n b" style="left:1057.60px;top:518.50px;transform-origin:0 15px;">89.08</div><div class="n b" style="left:1167.40px;top:518.50px;transform-origin:0 15px;">2,039.16</div><div class="n b" style="left:1349.20px;top:518.50px;transform-origin:0 15px;">91.75</div><div class="n b" style="left:1459.00px;top:518.50px;transform-origin:0 15px;">1,703.45</div><div class="n b" style="left:1640.60px;top:518.50px;transform-origin:0 15px;">86.71</div><div class="n" style="left:316.50px;top:552.50px;transform-origin:0 15px;-webkit-text-stroke:0.35px #252525;">861.73</div><div class="n" style="left:474.40px;top:552.50px;transform-origin:0 15px;-webkit-text-stroke:0.35px #252525;">32.27</div><div class="n" style="left:608.20px;top:552.50px;transform-origin:0 15px;-webkit-text-stroke:0.35px #252525;">525.52</div><div class="n" style="left:766.00px;top:552.50px;transform-origin:0 15px;-webkit-text-stroke:0.35px #252525;">29.11</div><div class="n" style="left:899.80px;top:552.50px;transform-origin:0 15px;-webkit-text-stroke:0.35px #252525;">483.54</div><div class="n" style="left:1057.60px;top:552.50px;transform-origin:0 15px;-webkit-text-stroke:0.35px #252525;">27.17</div><div class="n" style="left:1191.40px;top:552.50px;transform-origin:0 15px;-webkit-text-stroke:0.35px #252525;">601.52</div><div class="n" style="left:1349.20px;top:552.50px;transform-origin:0 15px;-webkit-text-stroke:0.35px #252525;">29.94</div><div class="n" style="left:1483.00px;top:552.50px;transform-origin:0 15px;-webkit-text-stroke:0.35px #252525;">584.98</div><div class="n" style="left:1640.60px;top:552.50px;transform-origin:0 15px;-webkit-text-stroke:0.35px #252525;">28.31</div><div class="n" style="left:316.50px;top:590.00px;transform-origin:0 15px;">300.29</div><div class="n" style="left:474.40px;top:590.00px;transform-origin:0 15px;">12.23</div><div class="n" style="left:608.20px;top:590.00px;transform-origin:0 15px;">180.82</div><div class="n" style="left:766.00px;top:590.00px;transform-origin:0 15px;">12.72</div><div class="n" style="left:911.80px;top:590.00px;transform-origin:0 15px;">80.93</div><div class="n" style="left:1069.60px;top:590.00px;transform-origin:0 15px;">8.99</div><div class="n" style="left:1191.40px;top:590.00px;transform-origin:0 15px;">329.87</div><div class="n" style="left:1349.20px;top:590.00px;transform-origin:0 15px;">14.86</div><div class="n" style="left:1483.00px;top:590.00px;transform-origin:0 15px;">146.97</div><div class="n" style="left:1652.60px;top:590.00px;transform-origin:0 15px;">7.91</div><div class="n" style="left:316.50px;top:622.50px;transform-origin:0 15px;">121.99</div><div class="n" style="left:486.40px;top:622.50px;transform-origin:0 15px;">7.03</div><div class="n" style="left:608.20px;top:622.50px;transform-origin:0 15px;">148.69</div><div class="n" style="left:778.00px;top:622.50px;transform-origin:0 15px;">9.26</div><div class="n" style="left:899.80px;top:622.50px;transform-origin:0 15px;">175.90</div><div class="n" style="left:1057.60px;top:622.50px;transform-origin:0 15px;">15.66</div><div class="n" style="left:1191.40px;top:622.50px;transform-origin:0 15px;">266.73</div><div class="n" style="left:1349.20px;top:622.50px;transform-origin:0 15px;">12.45</div><div class="n" style="left:1483.00px;top:622.50px;transform-origin:0 15px;">130.57</div><div class="n" style="left:1652.60px;top:622.50px;transform-origin:0 15px;">7.97</div><div class="n" style="left:316.50px;top:655.00px;transform-origin:0 15px;">263.11</div><div class="n" style="left:486.40px;top:655.00px;transform-origin:0 15px;">9.18</div><div class="n" style="left:608.20px;top:655.00px;transform-origin:0 15px;">196.01</div><div class="n" style="left:778.00px;top:655.00px;transform-origin:0 15px;">7.13</div><div class="n" style="left:1215.40px;top:655.00px;transform-origin:0 15px;">3.15</div><div class="n" style="left:1361.20px;top:655.00px;transform-origin:0 15px;">1.76</div><div class="n" style="left:1483.00px;top:655.00px;transform-origin:0 15px;">305.15</div><div class="n" style="left:1640.60px;top:655.00px;transform-origin:0 15px;">11.29</div><div class="n" style="left:316.50px;top:688.00px;transform-origin:0 15px;">176.34</div><div class="n" style="left:486.40px;top:688.00px;transform-origin:0 15px;">3.83</div><div class="n" style="left:899.80px;top:688.00px;transform-origin:0 15px;">226.71</div><div class="n" style="left:1069.60px;top:688.00px;transform-origin:0 15px;">2.52</div><div class="n" style="left:1215.40px;top:688.00px;transform-origin:0 15px;">1.77</div><div class="n" style="left:1361.20px;top:688.00px;transform-origin:0 15px;">0.88</div><div class="n" style="left:1507.00px;top:688.00px;transform-origin:0 15px;">2.29</div><div class="n" style="left:1652.60px;top:688.00px;transform-origin:0 15px;">1.14</div><div class="n" style="left:316.50px;top:718.00px;transform-origin:0 15px;-webkit-text-stroke:0.35px #252525;">520.95</div><div class="n" style="left:474.40px;top:718.00px;transform-origin:0 15px;-webkit-text-stroke:0.35px #252525;">13.47</div><div class="n" style="left:608.20px;top:718.00px;transform-origin:0 15px;-webkit-text-stroke:0.35px #252525;">616.39</div><div class="n" style="left:766.00px;top:718.00px;transform-origin:0 15px;-webkit-text-stroke:0.35px #252525;">18.29</div><div class="n" style="left:899.80px;top:718.00px;transform-origin:0 15px;-webkit-text-stroke:0.35px #252525;">518.51</div><div class="n" style="left:1057.60px;top:718.00px;transform-origin:0 15px;-webkit-text-stroke:0.35px #252525;">11.95</div><div class="n" style="left:1191.40px;top:718.00px;transform-origin:0 15px;-webkit-text-stroke:0.35px #252525;">339.07</div><div class="n" style="left:1349.20px;top:718.00px;transform-origin:0 15px;-webkit-text-stroke:0.35px #252525;">14.70</div><div class="n" style="left:1483.00px;top:718.00px;transform-origin:0 15px;-webkit-text-stroke:0.35px #252525;">213.38</div><div class="n" style="left:1652.60px;top:718.00px;transform-origin:0 15px;-webkit-text-stroke:0.35px #252525;">9.64</div><div class="n" style="left:316.50px;top:756.00px;transform-origin:0 15px;">220.56</div><div class="n" style="left:486.40px;top:756.00px;transform-origin:0 15px;">6.01</div><div class="n" style="left:608.20px;top:756.00px;transform-origin:0 15px;">333.84</div><div class="n" style="left:778.00px;top:756.00px;transform-origin:0 15px;">6.36</div><div class="n" style="left:899.80px;top:756.00px;transform-origin:0 15px;">124.03</div><div class="n" style="left:1069.60px;top:756.00px;transform-origin:0 15px;">5.39</div><div class="n" style="left:1191.40px;top:756.00px;transform-origin:0 15px;">141.03</div><div class="n" style="left:1361.20px;top:756.00px;transform-origin:0 15px;">6.09</div><div class="n" style="left:1483.00px;top:756.00px;transform-origin:0 15px;">186.27</div><div class="n" style="left:1652.60px;top:756.00px;transform-origin:0 15px;">6.99</div><div class="n" style="left:316.50px;top:788.00px;transform-origin:0 15px;">135.13</div><div class="n" style="left:486.40px;top:788.00px;transform-origin:0 15px;">1.78</div><div class="n" style="left:632.20px;top:788.00px;transform-origin:0 15px;">9.03</div><div class="n" style="left:778.00px;top:788.00px;transform-origin:0 15px;">0.94</div><div class="n" style="left:899.80px;top:788.00px;transform-origin:0 15px;">391.11</div><div class="n" style="left:1069.60px;top:788.00px;transform-origin:0 15px;">4.87</div><div class="n" style="left:1191.40px;top:788.00px;transform-origin:0 15px;">141.74</div><div class="n" style="left:1361.20px;top:788.00px;transform-origin:0 15px;">1.86</div><div class="n" style="left:1495.00px;top:788.00px;transform-origin:0 15px;">11.87</div><div class="n" style="left:1652.60px;top:788.00px;transform-origin:0 15px;">1.24</div><div class="n" style="left:608.20px;top:820.00px;transform-origin:0 15px;">266.49</div><div class="n" style="left:778.00px;top:820.00px;transform-origin:0 15px;">4.65</div><div class="n" style="left:923.80px;top:820.00px;transform-origin:0 15px;">3.37</div><div class="n" style="left:1069.60px;top:820.00px;transform-origin:0 15px;">1.69</div><div class="n" style="left:1507.00px;top:820.00px;transform-origin:0 15px;">2.29</div><div class="n" style="left:1652.60px;top:820.00px;transform-origin:0 15px;">1.14</div><div class="n" style="left:316.50px;top:853.30px;transform-origin:0 15px;">165.26</div><div class="n" style="left:486.40px;top:853.30px;transform-origin:0 15px;">5.68</div><div class="n" style="left:632.20px;top:853.30px;transform-origin:0 15px;">7.03</div><div class="n" style="left:778.00px;top:853.30px;transform-origin:0 15px;">6.34</div><div class="n" style="left:1203.40px;top:853.30px;transform-origin:0 15px;">56.30</div><div class="n" style="left:1361.20px;top:853.30px;transform-origin:0 15px;">6.74</div><div class="n" style="left:1495.00px;top:853.30px;transform-origin:0 15px;">12.96</div><div class="n" style="left:1652.60px;top:853.30px;transform-origin:0 15px;">0.27</div><div class="n" style="left:316.50px;top:883.10px;transform-origin:0 15px;-webkit-text-stroke:0.35px #252525;">176.09</div><div class="n" style="left:474.40px;top:883.10px;transform-origin:0 15px;-webkit-text-stroke:0.35px #252525;">11.48</div><div class="n" style="left:608.20px;top:883.10px;transform-origin:0 15px;-webkit-text-stroke:0.35px #252525;">444.52</div><div class="n" style="left:766.00px;top:883.10px;transform-origin:0 15px;-webkit-text-stroke:0.35px #252525;">12.89</div><div class="n" style="left:899.80px;top:883.10px;transform-origin:0 15px;-webkit-text-stroke:0.35px #252525;">404.77</div><div class="n" style="left:1057.60px;top:883.10px;transform-origin:0 15px;-webkit-text-stroke:0.35px #252525;">12.24</div><div class="n" style="left:1191.40px;top:883.10px;transform-origin:0 15px;-webkit-text-stroke:0.35px #252525;">442.13</div><div class="n" style="left:1349.20px;top:883.10px;transform-origin:0 15px;-webkit-text-stroke:0.35px #252525;">14.95</div><div class="n" style="left:1483.00px;top:883.10px;transform-origin:0 15px;-webkit-text-stroke:0.35px #252525;">373.15</div><div class="n" style="left:1640.60px;top:883.10px;transform-origin:0 15px;-webkit-text-stroke:0.35px #252525;">12.54</div><div class="n" style="left:328.50px;top:921.60px;transform-origin:0 15px;">84.17</div><div class="n" style="left:486.40px;top:921.60px;transform-origin:0 15px;">2.27</div><div class="n" style="left:608.20px;top:921.60px;transform-origin:0 15px;">165.45</div><div class="n" style="left:778.00px;top:921.60px;transform-origin:0 15px;">2.18</div><div class="n" style="left:899.80px;top:921.60px;transform-origin:0 15px;">239.30</div><div class="n" style="left:1069.60px;top:921.60px;transform-origin:0 15px;">3.14</div><div class="n" style="left:1191.40px;top:921.60px;transform-origin:0 15px;">412.40</div><div class="n" style="left:1361.20px;top:921.60px;transform-origin:0 15px;">4.98</div><div class="n" style="left:1495.00px;top:921.60px;transform-origin:0 15px;">48.60</div><div class="n" style="left:1652.60px;top:921.60px;transform-origin:0 15px;">0.61</div><div class="n" style="left:328.50px;top:953.70px;transform-origin:0 15px;">58.86</div><div class="n" style="left:486.40px;top:953.70px;transform-origin:0 15px;">4.42</div><div class="n" style="left:620.20px;top:953.70px;transform-origin:0 15px;">56.30</div><div class="n" style="left:778.00px;top:953.70px;transform-origin:0 15px;">3.06</div><div class="n" style="left:899.80px;top:953.70px;transform-origin:0 15px;">114.77</div><div class="n" style="left:1069.60px;top:953.70px;transform-origin:0 15px;">3.68</div><div class="n" style="left:1203.40px;top:953.70px;transform-origin:0 15px;">12.33</div><div class="n" style="left:1361.20px;top:953.70px;transform-origin:0 15px;">4.14</div><div class="n" style="left:1483.00px;top:953.70px;transform-origin:0 15px;">205.52</div><div class="n" style="left:1652.60px;top:953.70px;transform-origin:0 15px;">5.64</div><div class="n" style="left:328.50px;top:986.90px;transform-origin:0 15px;">14.89</div><div class="n" style="left:486.40px;top:986.90px;transform-origin:0 15px;">2.97</div><div class="n" style="left:620.20px;top:986.90px;transform-origin:0 15px;">85.34</div><div class="n" style="left:778.00px;top:986.90px;transform-origin:0 15px;">6.12</div><div class="n" style="left:911.80px;top:986.90px;transform-origin:0 15px;">50.70</div><div class="n" style="left:1069.60px;top:986.90px;transform-origin:0 15px;">5.42</div><div class="n" style="left:1203.40px;top:986.90px;transform-origin:0 15px;">17.40</div><div class="n" style="left:1361.20px;top:986.90px;transform-origin:0 15px;">5.83</div><div class="n" style="left:1483.00px;top:986.90px;transform-origin:0 15px;">119.02</div><div class="n" style="left:1652.60px;top:986.90px;transform-origin:0 15px;">6.29</div><div class="n" style="left:328.50px;top:1019.40px;transform-origin:0 15px;">18.17</div><div class="n" style="left:486.40px;top:1019.40px;transform-origin:0 15px;">1.82</div><div class="n" style="left:608.20px;top:1019.40px;transform-origin:0 15px;">137.43</div><div class="n" style="left:778.00px;top:1019.40px;transform-origin:0 15px;">1.53</div><div class="n" style="left:316.50px;top:1050.10px;transform-origin:0 15px;-webkit-text-stroke:0.35px #252525;">262.26</div><div class="n" style="left:474.40px;top:1050.10px;transform-origin:0 15px;-webkit-text-stroke:0.35px #252525;">17.01</div><div class="n" style="left:608.20px;top:1050.10px;transform-origin:0 15px;-webkit-text-stroke:0.35px #252525;">549.84</div><div class="n" style="left:766.00px;top:1050.10px;transform-origin:0 15px;-webkit-text-stroke:0.35px #252525;">19.47</div><div class="n" style="left:899.80px;top:1050.10px;transform-origin:0 15px;-webkit-text-stroke:0.35px #252525;">674.59</div><div class="n" style="left:1057.60px;top:1050.10px;transform-origin:0 15px;-webkit-text-stroke:0.35px #252525;">14.99</div><div class="n" style="left:1191.40px;top:1050.10px;transform-origin:0 15px;-webkit-text-stroke:0.35px #252525;">110.17</div><div class="n" style="left:1361.20px;top:1050.10px;transform-origin:0 15px;-webkit-text-stroke:0.35px #252525;">8.48</div><div class="n" style="left:1483.00px;top:1050.10px;transform-origin:0 15px;-webkit-text-stroke:0.35px #252525;">159.86</div><div class="n" style="left:1640.60px;top:1050.10px;transform-origin:0 15px;-webkit-text-stroke:0.35px #252525;">12.20</div><div class="n" style="left:328.50px;top:1087.80px;transform-origin:0 15px;">64.58</div><div class="n" style="left:486.40px;top:1087.80px;transform-origin:0 15px;">8.59</div><div class="n" style="left:608.20px;top:1087.80px;transform-origin:0 15px;">204.55</div><div class="n" style="left:778.00px;top:1087.80px;transform-origin:0 15px;">6.68</div><div class="n" style="left:899.80px;top:1087.80px;transform-origin:0 15px;">484.97</div><div class="n" style="left:1069.60px;top:1087.80px;transform-origin:0 15px;">5.84</div><div class="n" style="left:1215.40px;top:1087.80px;transform-origin:0 15px;">5.92</div><div class="n" style="left:1361.20px;top:1087.80px;transform-origin:0 15px;">0.91</div><div class="n" style="left:1495.00px;top:1087.80px;transform-origin:0 15px;">21.80</div><div class="n" style="left:1652.60px;top:1087.80px;transform-origin:0 15px;">2.30</div><div class="n" style="left:328.50px;top:1120.30px;transform-origin:0 15px;">78.34</div><div class="n" style="left:486.40px;top:1120.30px;transform-origin:0 15px;">3.99</div><div class="n" style="left:608.20px;top:1120.30px;transform-origin:0 15px;">286.97</div><div class="n" style="left:778.00px;top:1120.30px;transform-origin:0 15px;">8.16</div><div class="n" style="left:911.80px;top:1120.30px;transform-origin:0 15px;">93.69</div><div class="n" style="left:1069.60px;top:1120.30px;transform-origin:0 15px;">5.23</div><div class="n" style="left:1215.40px;top:1120.30px;transform-origin:0 15px;">9.71</div><div class="n" style="left:1361.20px;top:1120.30px;transform-origin:0 15px;">3.44</div><div class="n" style="left:1495.00px;top:1120.30px;transform-origin:0 15px;">86.37</div><div class="n" style="left:1652.60px;top:1120.30px;transform-origin:0 15px;">8.31</div><div class="n" style="left:316.50px;top:1152.60px;transform-origin:0 15px;">119.35</div><div class="n" style="left:486.40px;top:1152.60px;transform-origin:0 15px;">4.44</div><div class="n" style="left:620.20px;top:1152.60px;transform-origin:0 15px;">58.32</div><div class="n" style="left:778.00px;top:1152.60px;transform-origin:0 15px;">4.63</div><div class="n" style="left:923.80px;top:1152.60px;transform-origin:0 15px;">5.39</div><div class="n" style="left:1069.60px;top:1152.60px;transform-origin:0 15px;">2.91</div><div class="n" style="left:1203.40px;top:1152.60px;transform-origin:0 15px;">91.55</div><div class="n" style="left:1361.20px;top:1152.60px;transform-origin:0 15px;">2.64</div><div class="n" style="left:1495.00px;top:1152.60px;transform-origin:0 15px;">51.69</div><div class="n" style="left:1652.60px;top:1152.60px;transform-origin:0 15px;">1.59</div><div class="n" style="left:911.80px;top:1185.20px;transform-origin:0 15px;">90.54</div><div class="n" style="left:1069.60px;top:1185.20px;transform-origin:0 15px;">1.01</div><div class="n" style="left:1215.40px;top:1185.20px;transform-origin:0 15px;">2.99</div><div class="n" style="left:1361.20px;top:1185.20px;transform-origin:0 15px;">1.49</div>
</body></html>
